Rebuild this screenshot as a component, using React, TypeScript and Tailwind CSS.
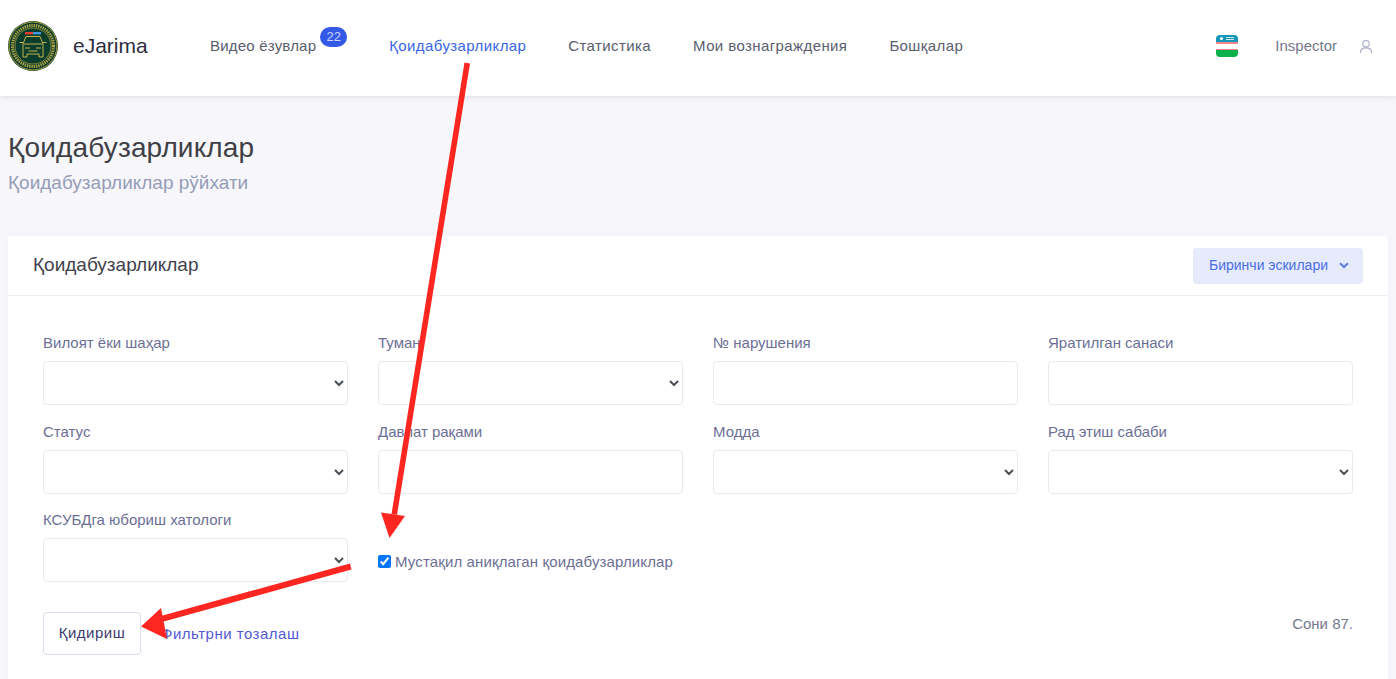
const navItems = ["Статистика", "Мои вознаграждения", "Бошқалар"];

function Logo() {
  return (
    <svg width="50" height="50" viewBox="0 0 50 50" className="shrink-0">
      <circle cx="25" cy="25" r="25" fill="#0a3d2b" />
      <circle cx="25" cy="25" r="24" fill="none" stroke="#d2b13f" strokeWidth="0.8" />
      <circle cx="25" cy="25" r="20.5" fill="none" stroke="#d8bd4c" strokeWidth="3.2" strokeDasharray="1.4 0.9" opacity="0.8" />
      <circle cx="25" cy="25" r="18" fill="#0a3d2b" stroke="#d2b13f" strokeWidth="0.6" />
      <rect x="17" y="11" width="8" height="2.4" fill="#ee3b2f" />
      <rect x="25" y="11" width="8" height="2.4" fill="#3f9ae0" />
      <path d="M15 23 L18 15.5 H32 L35 23 V36 H31 V33 H19 V36 H15 Z" fill="none" stroke="#dcbf52" strokeWidth="0.9" />
      <path d="M16 23 H34 M17 27 H22 M28 27 H33 M20.5 30 H29.5 M11.5 21.5 H15 M35 21.5 H38.5" fill="none" stroke="#dcbf52" strokeWidth="0.9" />
    </svg>
  );
}

function Flag() {
  return (
    <div className="w-[22px] h-[22px] rounded-[4px] overflow-hidden flex flex-col shrink-0">
      <div className="h-[7px] bg-[#1497b4] flex items-center pl-[4px] gap-[2px]">
        <div className="w-[3px] h-[3px] rounded-full bg-white" />
        <div className="w-[8px] h-[3px] border-y border-white/80 ml-[1px]" />
      </div>
      <div className="h-[1.5px] bg-[#f4858f]" />
      <div className="h-[5px] bg-white" />
      <div className="h-[1.5px] bg-[#f4858f]" />
      <div className="flex-1 bg-[#0cb14b]" />
    </div>
  );
}

function Field({ label, type }: { label: string; type: "select" | "input" }) {
  const cls =
    "block w-full h-[44px] bg-white border border-[#e9e9f2] rounded-[4px] text-[14px] text-[#495057] px-[3px] outline-none";
  return (
    <div>
      <label className="block text-[15px] leading-[21px] text-[#6c6f95] mb-[8px]">{label}</label>
      {type === "select" ? <select className={cls} /> : <input type="text" className={cls} />}
    </div>
  );
}

export default function App() {
  return (
    <div
      className="relative w-[1396px] h-[679px] overflow-hidden bg-[#f7f7fb]"
      style={{ fontFamily: '"Liberation Sans", Arial, sans-serif' }}
    >
      {/* Шапка */}
      <header className="h-[96px] pb-[4px] bg-white shadow-[0_1px_6px_rgba(60,60,90,0.14)] flex items-center pl-[8px] pr-[23px]">
        <Logo />
        <span className="ml-[15px] w-[137px] text-[21px] text-[#2e2e3e]">eJarima</span>
        <nav className="flex items-center text-[15px] tracking-[0.4px] text-[#595d6e]">
          <div className="flex items-start mr-[42px]">
            <span className="tracking-[0.2px]">Видео ёзувлар</span>
            <span className="ml-[4px] -mt-[8px] w-[27px] h-[20px] rounded-full bg-[#3459e6] text-[#c9d4fb] text-[13px] leading-[20px] text-center tracking-normal">
              22
            </span>
          </div>
          <span className="mr-[42px] text-[#3a66e5]">Қоидабузарликлар</span>
          {navItems.map((item) => (
            <span key={item} className="mr-[42px]">
              {item}
            </span>
          ))}
        </nav>
        <div className="ml-auto flex items-center">
          <Flag />
          <span className="ml-[37px] text-[15px] text-[#74788d]">Inspector</span>
          <svg width="14" height="15" viewBox="0 0 15 15" fill="none" stroke="#a9adc6" strokeWidth="1.2" className="ml-[22px]">
            <circle cx="7.5" cy="4.5" r="3.4" />
            <path d="M1.5 14 C1.5 10.5 4 9 7.5 9 C11 9 13.5 10.5 13.5 14" strokeLinecap="round" />
          </svg>
        </div>
      </header>

      {/* Заголовок страницы */}
      <div className="pl-[8px] pt-[36px]">
        <h1 className="text-[28px] leading-[32px] tracking-[0.15px] text-[#3f3f46]">Қоидабузарликлар</h1>
        <p className="mt-[8px] text-[19px] leading-[22px] text-[#959cb6]">Қоидабузарликлар рўйхати</p>
      </div>

      {/* Карточка */}
      <section className="mx-[8px] mt-[42px] pb-[60px] bg-white rounded-[4px] shadow-[0_0_10px_rgba(80,80,140,0.04)]">
        <div className="h-[60px] border-b border-[#ebedf2] flex items-center justify-between pl-[25px] pr-[25px]">
          <h3 className="text-[19px] text-[#3f3f4e]">Қоидабузарликлар</h3>
          <button className="h-[36px] w-[170px] rounded-[4px] bg-[#e6ebfb] text-[#4a6ee8] text-[14px] flex items-center pl-[16px]">
            Биринчи эскилари
            <svg width="10" height="7" viewBox="0 0 10 7" fill="none" stroke="#5a7ce8" strokeWidth="2" className="ml-[11px]">
              <path d="M1 1.2 L5 5 L9 1.2" />
            </svg>
          </button>
        </div>

        <div className="px-[35px] pt-[36px]">
          <div className="grid grid-cols-4 gap-x-[30px] gap-y-[15.5px]">
            <Field label="Вилоят ёки шаҳар" type="select" />
            <Field label="Туман" type="select" />
            <Field label="№ нарушения" type="input" />
            <Field label="Яратилган санаси" type="input" />
            <Field label="Статус" type="select" />
            <Field label="Давлат рақами" type="input" />
            <Field label="Модда" type="select" />
            <Field label="Рад этиш сабаби" type="select" />
            <Field label="КСУБДга юбориш хатологи" type="select" />
            <label className="col-span-3 flex items-center h-[73px] pt-[33px] text-[15px] tracking-[0.13px] text-[#6c6f95]">
              <input type="checkbox" defaultChecked className="w-[13px] h-[13px] mr-[4px] -mt-[2px] accent-[#0075ff]" />
              Мустақил аниқлаган қоидабузарликлар
            </label>
          </div>

          <div className="mt-[30px] flex items-start">
            <button className="h-[43px] w-[98px] rounded-[4px] border border-[#dddcee] bg-white text-[15px] tracking-[0.5px] text-[#3e3a6d]">
              Қидириш
            </button>
            <a className="ml-[20px] mt-[11px] text-[15px] tracking-[0.5px] text-[#5259d6]">Фильтрни тозалаш</a>
            <span className="ml-auto mt-[1px] text-[15px] text-[#74788d]">Сони 87.</span>
          </div>
        </div>
      </section>

      {/* Стрелки поверх страницы */}
      <svg width="1396" height="679" viewBox="0 0 1396 679" className="absolute inset-0 pointer-events-none">
        <g fill="#fe2620">
          <polygon points="464.5,62.5 470,63.5 397,515 391.5,514" />
          <polygon points="381,512.5 405,516 389.5,538" />
          <polygon points="350,563.5 351.5,569.5 162,622 161,616" />
          <polygon points="161,608 167,639 141,626.5" />
        </g>
      </svg>
    </div>
  );
}
